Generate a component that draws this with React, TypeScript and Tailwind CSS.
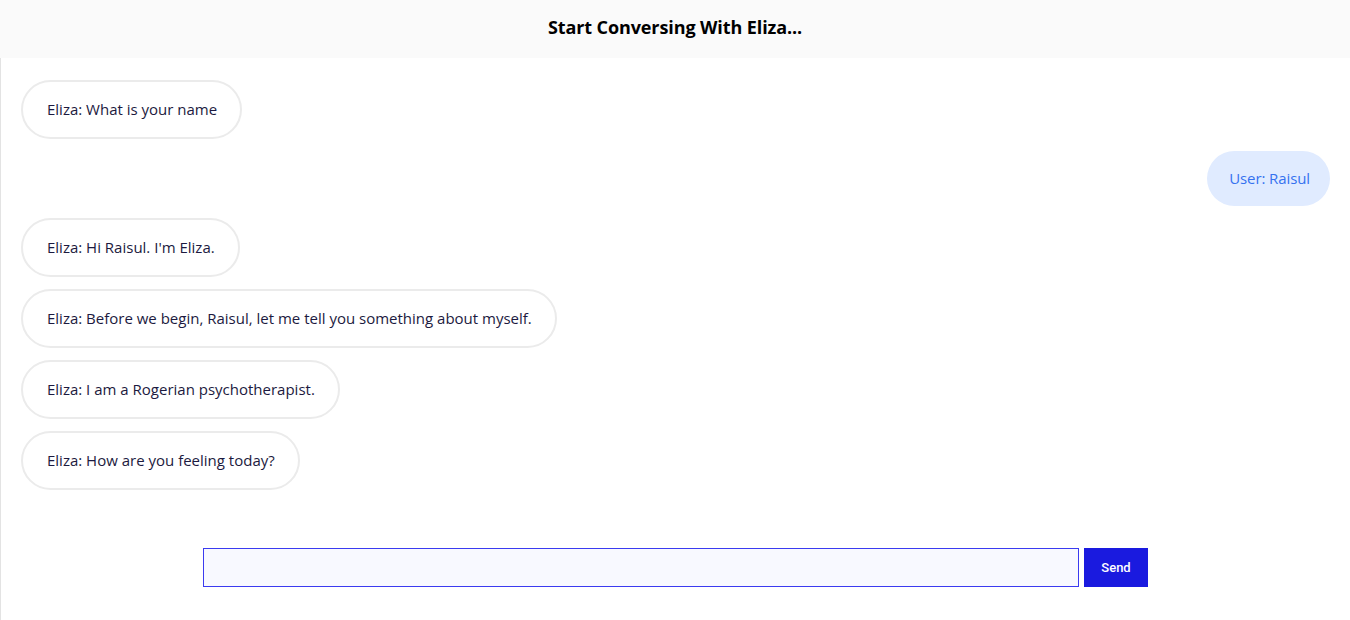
import React from "react";

const messages: { from: "eliza" | "user"; text: string }[] = [
  { from: "eliza", text: "Eliza: What is your name" },
  { from: "user", text: "User: Raisul" },
  { from: "eliza", text: "Eliza: Hi Raisul. I'm Eliza." },
  { from: "eliza", text: "Eliza: Before we begin, Raisul, let me tell you something about myself." },
  { from: "eliza", text: "Eliza: I am a Rogerian psychotherapist." },
  { from: "eliza", text: "Eliza: How are you feeling today?" },
];

export default function App() {
  return (
    <div className="w-[1350px] h-[620px] bg-white flex flex-col overflow-hidden" style={{ fontFamily: '"Open Sans", "Noto Sans", sans-serif' }}>
      <div className="h-[58px] shrink-0 bg-[#fafafa] flex items-center justify-center pb-[4px]">
        <h1 className="text-[18px] font-bold text-black leading-none tracking-[-0.1px]">Start Conversing With Eliza...</h1>
      </div>
      <div className="flex-1 border-l border-[#e3e3e3] flex flex-col">
        <div className="flex flex-col gap-[12px] pl-[20px] pr-[20px] pt-[22px]">
          {messages.map((m, i) =>
            m.from === "eliza" ? (
              <div key={i} className="flex justify-start">
                <div className="rounded-full border-2 border-[#ebebeb] bg-white pl-[24px] pr-[23px] py-[17px] text-[15px] leading-[21px] text-[#1c1a40]">
                  {m.text}
                </div>
              </div>
            ) : (
              <div key={i} className="flex justify-end">
                <div className="rounded-full bg-[#e0ebff] pl-[22px] pr-[20px] py-[17px] text-[15px] leading-[21px] text-[#3572f0] tracking-[-0.1px]">
                  {m.text}
                </div>
              </div>
            )
          )}
        </div>
        <div className="flex justify-center gap-[5px] mt-[58px]">
          <input type="text" className="w-[876px] h-[39px] border border-[#3b3bf0] bg-[#f8f9ff] outline-none px-2" />
          <button className="w-[64px] h-[39px] bg-[#1a1adf] text-white text-[13px] font-medium" style={{ fontFamily: 'Roboto, sans-serif' }}>
            Send
          </button>
        </div>
      </div>
    </div>
  );
}
